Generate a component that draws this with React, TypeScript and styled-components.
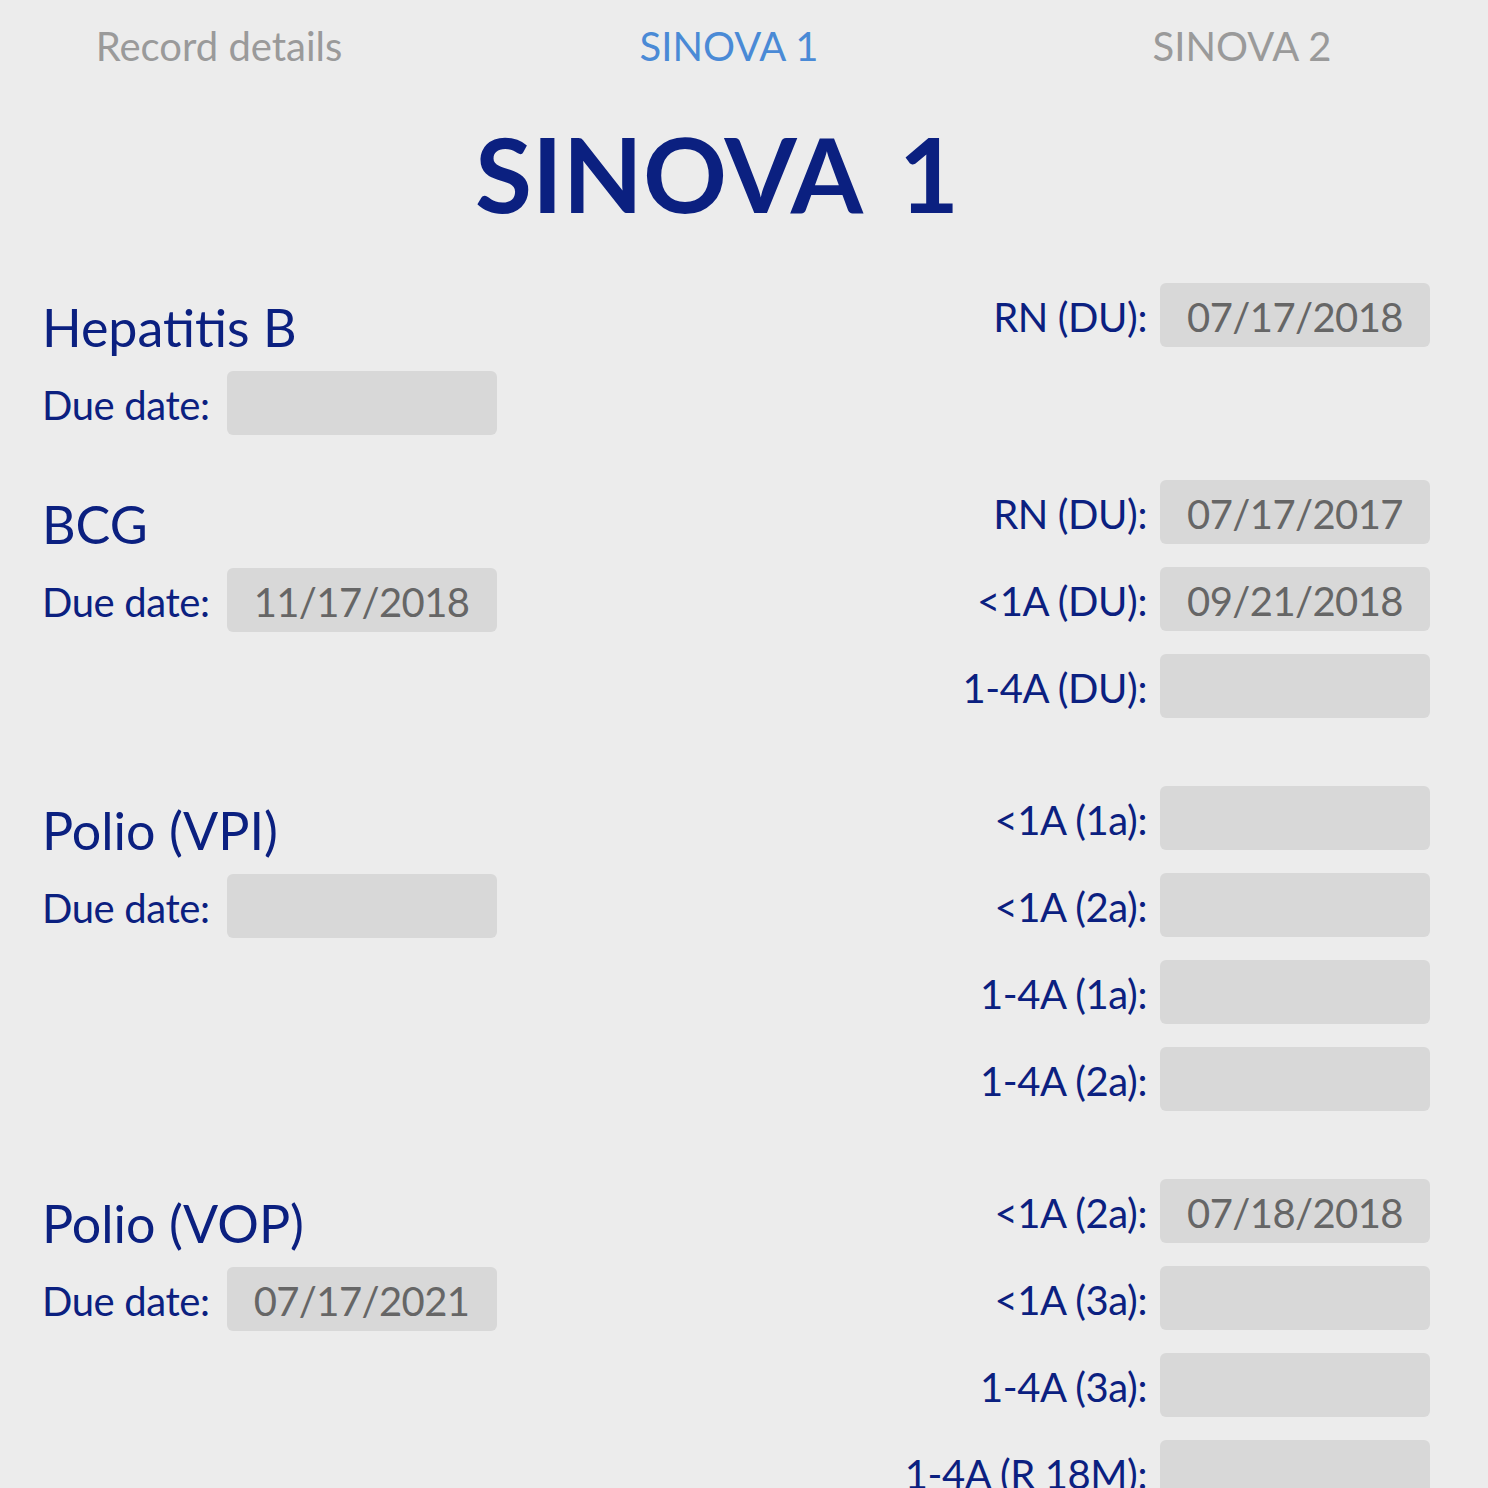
import styled, { createGlobalStyle } from 'styled-components'

const NAVY = '#0b2080'

const GlobalStyle = createGlobalStyle`
  html, body {
    margin: 0;
    padding: 0;
    background: #ececec;
    overflow: hidden;
  }
  body {
    font-family: Lato, 'Noto Sans', sans-serif;
  }
`

const Page = styled.div`
  width: 1488px;
  min-height: 1488px;
  background: #ececec;
  padding: 0 58px 0 42px;
  box-sizing: border-box;
`

const TabBar = styled.nav`
  display: grid;
  grid-template-columns: 438px 582px 444px;
  margin-left: -42px;
  padding-top: 22px;
`

const Tab = styled.div<{ $active?: boolean }>`
  text-align: center;
  font-size: 40px;
  line-height: 48px;
  color: ${(p) => (p.$active ? '#4a8ad6' : '#9a9a9a')};
`

const Title = styled.h1`
  margin: 38px 0 0;
  padding-right: 38px;
  text-align: center;
  font-size: 104px;
  line-height: 130px;
  font-weight: 700;
  word-spacing: 14px;
  color: ${NAVY};
`

const Section = styled.section`
  display: flex;
  justify-content: space-between;
  align-items: flex-start;
  margin-top: 45px;
`

const LeftCol = styled.div`
  display: flex;
  flex-direction: column;
`

const Heading = styled.h2`
  margin: 0 0 12px;
  padding-top: 12px;
  font-size: 52px;
  line-height: 64px;
  font-weight: 400;
  color: ${NAVY};
`

const RightCol = styled.div`
  display: flex;
  flex-direction: column;
  align-items: flex-end;
`

const FieldRow = styled.div<{ $spaced?: boolean; $gap?: number }>`
  display: flex;
  align-items: center;
  gap: ${(p) => p.$gap ?? 13}px;
  margin-bottom: ${(p) => (p.$spaced ? '23px' : '0')};
`

const Label = styled.span`
  font-size: 40px;
  line-height: 48px;
  padding-top: 4px;
  letter-spacing: -0.4px;
  color: ${NAVY};
`

const DateBox = styled.div`
  width: 270px;
  height: 64px;
  border-radius: 6px;
  background: #d8d8d8;
  display: flex;
  align-items: center;
  justify-content: center;
  padding-top: 4px;
  box-sizing: border-box;
  font-size: 40px;
  letter-spacing: -0.6px;
  color: #666666;
`

type Field = { label: string; value?: string }
type Vaccine = { name: string; due?: string; doses: Field[] }

const vaccines: Vaccine[] = [
  { name: 'Hepatitis B', doses: [{ label: 'RN (DU):', value: '07/17/2018' }] },
  {
    name: 'BCG',
    due: '11/17/2018',
    doses: [
      { label: 'RN (DU):', value: '07/17/2017' },
      { label: '<1A (DU):', value: '09/21/2018' },
      { label: '1-4A (DU):' },
    ],
  },
  {
    name: 'Polio (VPI)',
    doses: [
      { label: '<1A (1a):' },
      { label: '<1A (2a):' },
      { label: '1-4A (1a):' },
      { label: '1-4A (2a):' },
    ],
  },
  {
    name: 'Polio (VOP)',
    due: '07/17/2021',
    doses: [
      { label: '<1A (2a):', value: '07/18/2018' },
      { label: '<1A (3a):' },
      { label: '1-4A (3a):' },
      { label: '1-4A (R 18M):' },
    ],
  },
]

export default function App() {
  return (
    <Page>
      <GlobalStyle />
      <TabBar>
        <Tab>Record details</Tab>
        <Tab $active>SINOVA 1</Tab>
        <Tab>SINOVA 2</Tab>
      </TabBar>
      <Title>SINOVA 1</Title>
      {vaccines.map((v) => (
        <Section key={v.name}>
          <LeftCol>
            <Heading>{v.name}</Heading>
            <FieldRow $gap={17}>
              <Label>Due date:</Label>
              <DateBox>{v.due}</DateBox>
            </FieldRow>
          </LeftCol>
          <RightCol>
            {v.doses.map((d) => (
              <FieldRow key={d.label} $spaced>
                <Label>{d.label}</Label>
                <DateBox>{d.value}</DateBox>
              </FieldRow>
            ))}
          </RightCol>
        </Section>
      ))}
    </Page>
  )
}
